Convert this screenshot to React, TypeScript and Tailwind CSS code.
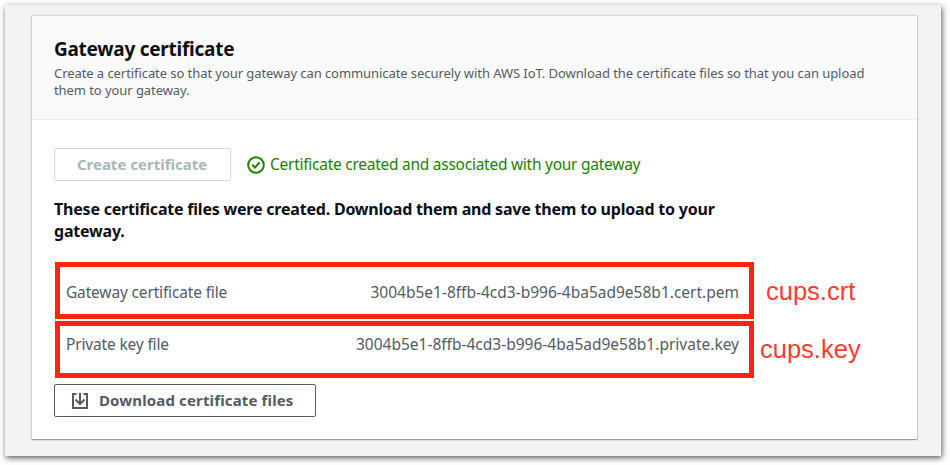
import React from "react";

function CheckCircle() {
  return (
    <svg className="h-[18px] w-[18px] shrink-0" viewBox="0 0 18 18" fill="none" stroke="#1d8102" strokeWidth="2">
      <circle cx="9" cy="9" r="7.8" />
      <path d="M5.200 8.800 8 11.500l4.600-5" />
    </svg>
  );
}

function DownloadIcon() {
  return (
    <svg className="h-4 w-4 shrink-0" viewBox="0 0 16 16" fill="none" stroke="#545b64" strokeWidth="2">
      <path d="M4.500 1H1v14h14V1h-3.500" />
      <path d="M8 0v11M3.500 6.500 8 11l4.500-4.500" />
    </svg>
  );
}

function FileRow({ label, file, className }: { label: string; file: string; className: string }) {
  return (
    <div className={`ml-px flex w-[699px] justify-between border-[5px] border-[#ff2412] pl-[6px] pr-[10px] text-[15.5px] leading-[22px] text-[#545b64] ${className}`}>
      <span className="whitespace-nowrap tracking-[-0.16px]">{label}</span>
      <span className="whitespace-nowrap">{file}</span>
    </div>
  );
}

export default function App() {
  return (
    <div className="h-[465px] w-[950px] overflow-hidden bg-white pl-[5px] pt-[5px] font-['Noto_Sans',sans-serif]">
      <div className="h-[451px] w-[936px] bg-[#f2f4f4] pl-[27px] pt-[11px] shadow-[1px_2px_6px_0_rgba(0,0,0,0.65)]">
        <section className="h-[423px] w-[885px] bg-white shadow-[0_1px_1px_0_rgba(0,28,36,0.3),0_0_1px_1px_rgba(0,28,36,0.12)]">
          <header className="h-[104px] border-b border-[#eaeded] bg-[#fafafa] pl-[22px] pt-[20px] whitespace-nowrap">
            <h1 className="text-[19px] font-bold leading-[26px] tracking-[-0.26px] text-[#0c0f15]">Gateway certificate</h1>
            <p className="mt-[3px] text-[13px] leading-[17px] tracking-[-0.07px] text-[#545b64]">
              Create a certificate so that your gateway can communicate securely with AWS IoT. Download the certificate files so that you can upload
              <br />
              them to your gateway.
            </p>
          </header>
          <div className="pl-[22px] pt-[28px] whitespace-nowrap">
            <div className="flex items-center">
              <button className="h-[33px] w-[177px] rounded-[2px] border border-[#d5dbdb] pr-px text-[15px] font-bold text-[#aab7b8]">Create certificate</button>
              <div className="ml-[16px] flex items-center gap-[5px] text-[15.5px] tracking-[-0.26px] text-[#1d8102]">
                <CheckCircle />
                <span>Certificate created and associated with your gateway</span>
              </div>
            </div>
            <p className="mt-[17px] text-[16px] font-bold leading-[22px] tracking-[-0.21px] text-[#0c0f15]">
              These certificate files were created. Download them and save them to upload to your
              <br />
              gateway.
            </p>
            <div className="mt-[20px] flex items-center">
              <FileRow label="Gateway certificate file" file="3004b5e1-8ffb-4cd3-b996-4ba5ad9e58b1.cert.pem" className="h-[57px] pt-[14px]" />
              <span className="ml-[12px] mt-[2px] font-['Liberation_Sans',sans-serif] text-[25.5px] text-[#ff3b30]">cups.crt</span>
            </div>
            <div className="mt-[2px] flex items-center">
              <FileRow label="Private key file" file="3004b5e1-8ffb-4cd3-b996-4ba5ad9e58b1.private.key" className="h-[57px] pt-[7px]" />
              <span className="ml-[6px] font-['Liberation_Sans',sans-serif] text-[25.5px] text-[#ff3b30]">cups.key</span>
            </div>
            <button className="mt-[6px] flex h-[33px] w-[262px] items-center rounded-[2px] border border-[#545b64] pl-[17px] text-[15px] font-bold tracking-[0.14px] text-[#545b64]">
              <DownloadIcon />
              <span className="ml-[11px]">Download certificate files</span>
            </button>
          </div>
        </section>
      </div>
    </div>
  );
}
